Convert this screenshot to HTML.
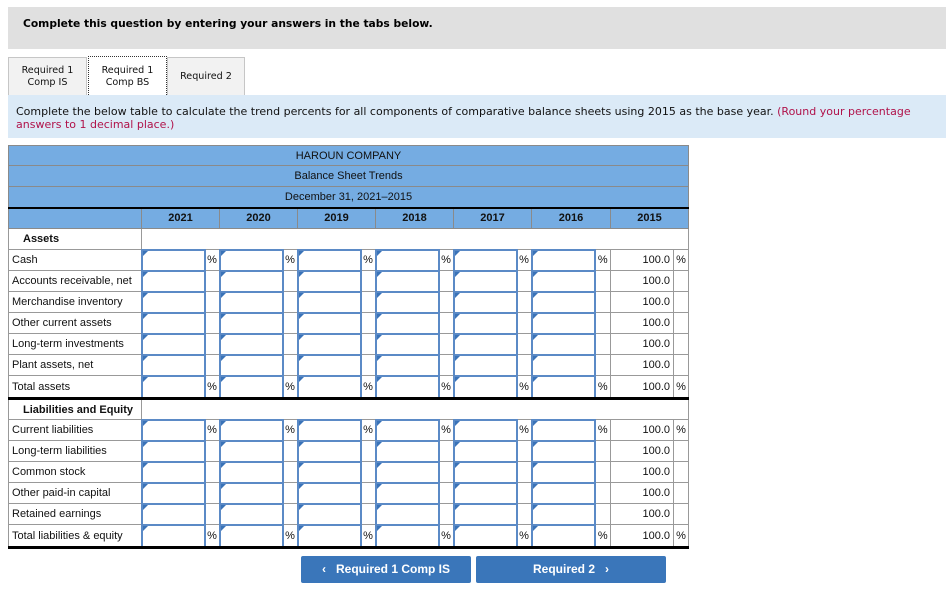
<!DOCTYPE html>
<html><head><style>
*{box-sizing:border-box;margin:0;padding:0}
body{width:952px;height:608px;background:#fff;font-family:"DejaVu Sans","Liberation Sans",sans-serif;position:relative;overflow:hidden}
.top{position:absolute;left:8px;top:7px;width:938px;height:42px;background:#e0e0e0;font-weight:bold;font-size:10.7px;padding:10px 0 0 15px;color:#000}
.tab{position:absolute;top:57px;height:39px;border:1px solid #c6c6c6;border-bottom:none;background:#f2f2f2;font-size:9.6px;text-align:center;color:#111;line-height:12px}
.tab.act{background:#fff;border:1px dotted #333;border-bottom:none;top:56px;height:41px}
.instr{position:absolute;left:8px;top:95px;width:938px;height:43px;background:#dbeaf7;font-size:11px;padding:10px 0 0 8px;line-height:13px;color:#111}
.instr span{color:#b0124a}
table{position:absolute;left:8px;top:145px;border-collapse:collapse;font-family:"Liberation Sans",sans-serif;font-size:11px;table-layout:fixed}
td{border:1px solid #999;height:21px;padding:0;color:#111}
.hd td{background:#75ace2;text-align:center;height:21px;border-color:#8a8a8a}
.yr td{font-weight:bold;border-top:2px solid #000}
.lab{padding-left:3px}
.inp{border:2px solid #5b8ac6;position:relative}
.inp:before{content:"";position:absolute;left:0;top:0;border-left:5px solid #3a73b8;border-bottom:5px solid transparent}
.pc{text-align:center;font-size:11px}
.v{text-align:right;padding-right:3px}
.tot td{height:23px}
.thick td{border-bottom:3px solid #000}
.btn{position:absolute;top:556px;height:27px;background:#3a76ba;color:#fff;font-family:"Liberation Sans",sans-serif;font-weight:bold;font-size:12px;text-align:center;line-height:27px;border-radius:2px}
</style></head><body>
<div class="top">Complete this question by entering your answers in the tabs below.</div>
<div class="tab" style="left:8px;width:79px;padding-top:7px">Required 1<br>Comp IS</div>
<div class="tab act" style="left:88px;width:79px;padding-top:8px">Required 1<br>Comp BS</div>
<div class="tab" style="left:167px;width:78px;padding-top:13px">Required 2</div>
<div class="instr">Complete the below table to calculate the trend percents for all components of comparative balance sheets using 2015 as the base year. <span>(Round your percentage answers to 1 decimal place.)</span></div>
<table>
<colgroup><col style="width:133px"><col style="width:63px"><col style="width:15px"><col style="width:63px"><col style="width:15px"><col style="width:63px"><col style="width:15px"><col style="width:63px"><col style="width:15px"><col style="width:63px"><col style="width:15px"><col style="width:63px"><col style="width:16px"><col style="width:63px"><col style="width:15px"></colgroup>
<tr class="hd"><td colspan="15" style="height:20px">HAROUN COMPANY</td></tr>
<tr class="hd"><td colspan="15">Balance Sheet Trends</td></tr>
<tr class="hd"><td colspan="15">December 31, 2021–2015</td></tr>
<tr class="hd yr"><td></td><td colspan="2">2021</td><td colspan="2">2020</td><td colspan="2">2019</td><td colspan="2">2018</td><td colspan="2">2017</td><td colspan="2">2016</td><td colspan="2">2015</td></tr>
<tr><td class="lab" style="font-weight:bold;padding-left:14px">Assets</td><td colspan="14"></td></tr>
<tr><td class="lab">Cash</td><td class="inp"></td><td class="pc">%</td><td class="inp"></td><td class="pc">%</td><td class="inp"></td><td class="pc">%</td><td class="inp"></td><td class="pc">%</td><td class="inp"></td><td class="pc">%</td><td class="inp"></td><td class="pc">%</td><td class="v">100.0</td><td class="pc">%</td></tr>
<tr><td class="lab">Accounts receivable, net</td><td class="inp"></td><td></td><td class="inp"></td><td></td><td class="inp"></td><td></td><td class="inp"></td><td></td><td class="inp"></td><td></td><td class="inp"></td><td></td><td class="v">100.0</td><td></td></tr>
<tr><td class="lab">Merchandise inventory</td><td class="inp"></td><td></td><td class="inp"></td><td></td><td class="inp"></td><td></td><td class="inp"></td><td></td><td class="inp"></td><td></td><td class="inp"></td><td></td><td class="v">100.0</td><td></td></tr>
<tr><td class="lab">Other current assets</td><td class="inp"></td><td></td><td class="inp"></td><td></td><td class="inp"></td><td></td><td class="inp"></td><td></td><td class="inp"></td><td></td><td class="inp"></td><td></td><td class="v">100.0</td><td></td></tr>
<tr><td class="lab">Long-term investments</td><td class="inp"></td><td></td><td class="inp"></td><td></td><td class="inp"></td><td></td><td class="inp"></td><td></td><td class="inp"></td><td></td><td class="inp"></td><td></td><td class="v">100.0</td><td></td></tr>
<tr><td class="lab">Plant assets, net</td><td class="inp"></td><td></td><td class="inp"></td><td></td><td class="inp"></td><td></td><td class="inp"></td><td></td><td class="inp"></td><td></td><td class="inp"></td><td></td><td class="v">100.0</td><td></td></tr>
<tr class="tot thick"><td class="lab">Total assets</td><td class="inp"></td><td class="pc">%</td><td class="inp"></td><td class="pc">%</td><td class="inp"></td><td class="pc">%</td><td class="inp"></td><td class="pc">%</td><td class="inp"></td><td class="pc">%</td><td class="inp"></td><td class="pc">%</td><td class="v">100.0</td><td class="pc">%</td></tr>
<tr><td class="lab" style="font-weight:bold;padding-left:14px">Liabilities and Equity</td><td colspan="14"></td></tr>
<tr><td class="lab">Current liabilities</td><td class="inp"></td><td class="pc">%</td><td class="inp"></td><td class="pc">%</td><td class="inp"></td><td class="pc">%</td><td class="inp"></td><td class="pc">%</td><td class="inp"></td><td class="pc">%</td><td class="inp"></td><td class="pc">%</td><td class="v">100.0</td><td class="pc">%</td></tr>
<tr><td class="lab">Long-term liabilities</td><td class="inp"></td><td></td><td class="inp"></td><td></td><td class="inp"></td><td></td><td class="inp"></td><td></td><td class="inp"></td><td></td><td class="inp"></td><td></td><td class="v">100.0</td><td></td></tr>
<tr><td class="lab">Common stock</td><td class="inp"></td><td></td><td class="inp"></td><td></td><td class="inp"></td><td></td><td class="inp"></td><td></td><td class="inp"></td><td></td><td class="inp"></td><td></td><td class="v">100.0</td><td></td></tr>
<tr><td class="lab">Other paid-in capital</td><td class="inp"></td><td></td><td class="inp"></td><td></td><td class="inp"></td><td></td><td class="inp"></td><td></td><td class="inp"></td><td></td><td class="inp"></td><td></td><td class="v">100.0</td><td></td></tr>
<tr><td class="lab">Retained earnings</td><td class="inp"></td><td></td><td class="inp"></td><td></td><td class="inp"></td><td></td><td class="inp"></td><td></td><td class="inp"></td><td></td><td class="inp"></td><td></td><td class="v">100.0</td><td></td></tr>
<tr class="tot thick"><td class="lab">Total liabilities &amp; equity</td><td class="inp"></td><td class="pc">%</td><td class="inp"></td><td class="pc">%</td><td class="inp"></td><td class="pc">%</td><td class="inp"></td><td class="pc">%</td><td class="inp"></td><td class="pc">%</td><td class="inp"></td><td class="pc">%</td><td class="v">100.0</td><td class="pc">%</td></tr>
</table>
<div class="btn" style="left:301px;width:170px">&#8249;&nbsp;&nbsp; Required 1 Comp IS</div>
<div class="btn" style="left:476px;width:190px">Required 2 &nbsp;&nbsp;&#8250;</div>
</body></html>
